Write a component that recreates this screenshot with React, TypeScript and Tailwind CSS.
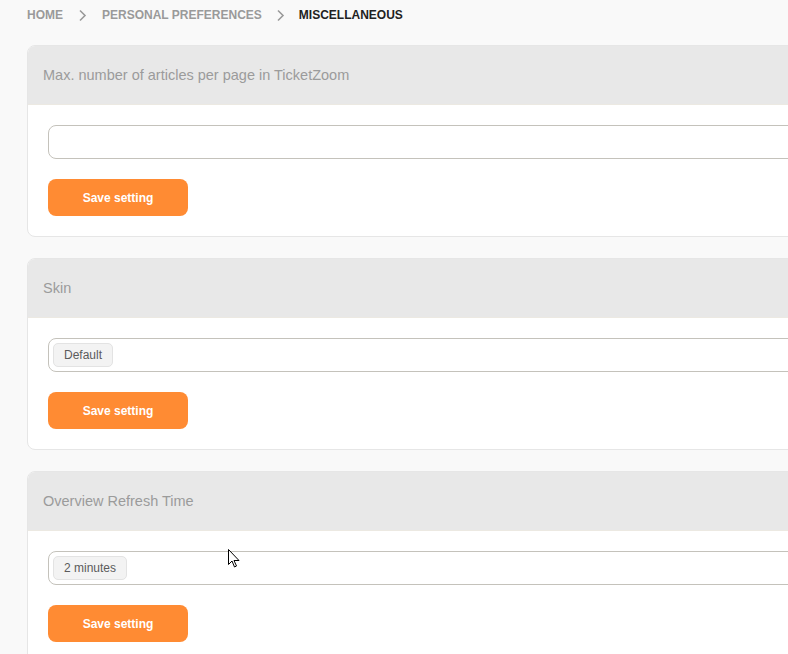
import React from 'react';

const FONT = { fontFamily: '"Liberation Sans", Arial, sans-serif' };

function Chevron() {
  return (
    <svg width="9" height="13" viewBox="0 0 9 13" className="shrink-0">
      <path d="M2 1.5 L7 6.5 L2 11.5" fill="none" stroke="#9a9a9a" strokeWidth="1.6" />
    </svg>
  );
}

function SettingCard({ title, chip }: { title: string; chip?: string }) {
  return (
    <div className="w-[1000px] rounded-[8px] border border-[#e6e6e6] bg-white overflow-hidden">
      <div className="h-[59px] bg-[#e8e8e8] border-b border-[#ece9e2] flex items-center px-[15px] pt-[2px]">
        <span className="text-[14.5px] text-[#9b9b9b]">{title}</span>
      </div>
      <div className="px-[20px] pt-[20px] pb-[20px]">
        <div className="h-[34px] rounded-[8px] border border-[#c4c2bb] bg-white flex items-center px-[4px]">
          {chip && (
            <span className="h-[24px] px-[10px] flex items-center rounded-[5px] border border-[#e3e3e3] bg-[#f3f3f3] text-[12px] text-[#5b5b5b]">
              {chip}
            </span>
          )}
        </div>
        <button className="mt-[20px] w-[140px] h-[37px] rounded-[8px] bg-[#ff8b33] text-white text-[12px] font-bold">
          Save setting
        </button>
      </div>
    </div>
  );
}

export default function App() {
  return (
    <div className="relative w-[788px] h-[654px] overflow-hidden bg-[#f9f9f9]" style={FONT}>
      <div className="pl-[27px]">
        <nav className="h-[30px] flex items-center text-[12px] font-bold uppercase">
          <span className="text-[#9a9a9a]">Home</span>
          <span className="mx-[15px] flex"><Chevron /></span>
          <span className="text-[#9a9a9a]">Personal Preferences</span>
          <span className="mx-[14px] flex"><Chevron /></span>
          <span className="text-[#222222]">Miscellaneous</span>
        </nav>
        <div className="mt-[15px] flex flex-col gap-[21px]">
          <SettingCard title="Max. number of articles per page in TicketZoom" />
          <SettingCard title="Skin" chip="Default" />
          <SettingCard title="Overview Refresh Time" chip="2 minutes" />
        </div>
      </div>
      {/* mouse pointer */}
      <svg className="absolute left-[228px] top-[549px]" width="12" height="19" viewBox="0 0 12 19">
        <path
          d="M0.5 0.5 L0.5 15.5 L4 12 L6.5 18 L8.5 17 L6 11.5 L11 11.5 Z"
          fill="#ffffff"
          stroke="#000000"
          strokeWidth="1"
          strokeLinejoin="miter"
        />
      </svg>
    </div>
  );
}
